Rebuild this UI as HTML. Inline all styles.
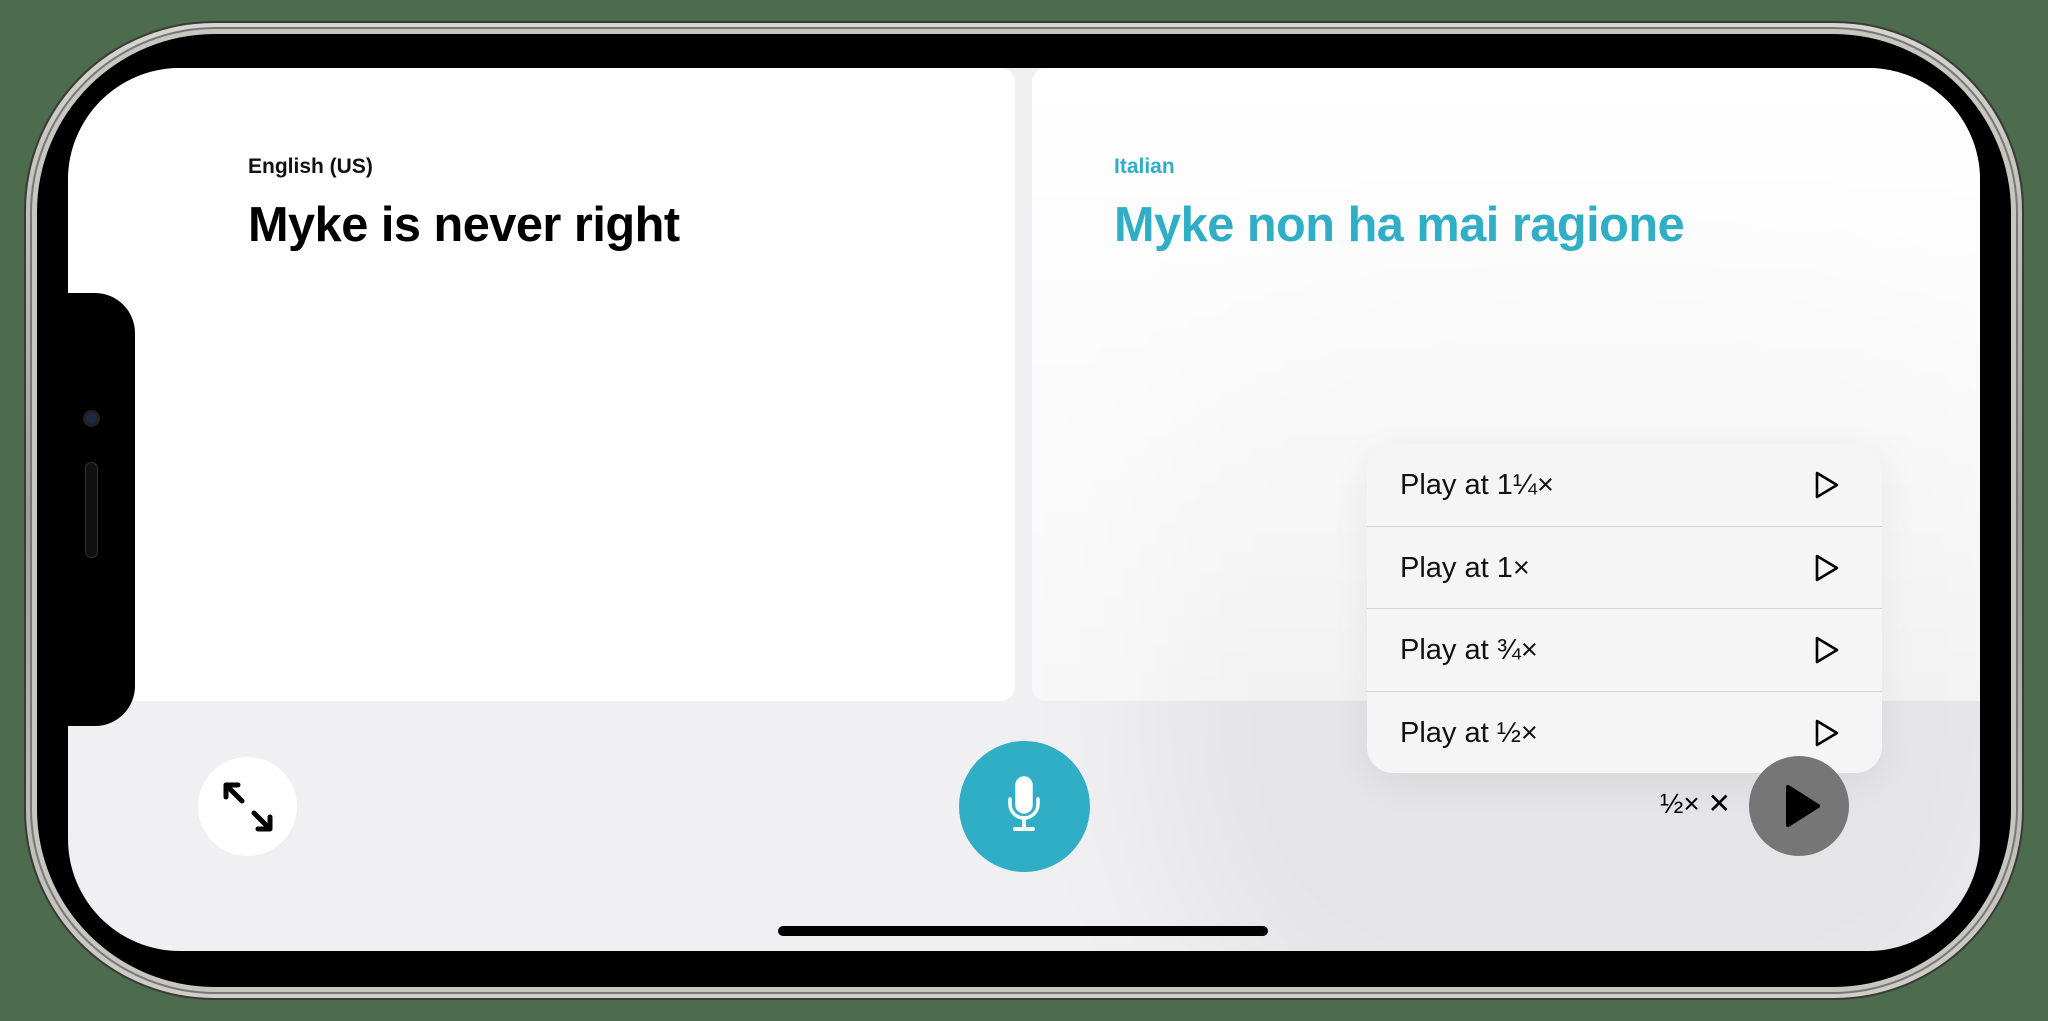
<!DOCTYPE html>
<html><head><meta charset="utf-8"><style>
*{margin:0;padding:0;box-sizing:border-box}
html,body{width:2048px;height:1021px;overflow:hidden;background:#4d6b4d;font-family:"Liberation Sans",sans-serif}
.rim{position:absolute;left:24px;top:21px;width:2000px;height:979px;border-radius:190px;background:linear-gradient(#d8d6d0,#a09e98 50%,#d0cec8);border:2px solid #3a3a38}
.rim2{position:absolute;left:30px;top:27px;width:1988px;height:967px;border-radius:186px;background:#c8c6c0;border:2px solid #777}
.black{position:absolute;left:37px;top:34px;width:1974px;height:953px;border-radius:178px;background:#000}
.screen{position:absolute;left:68px;top:68px;width:1912px;height:883px;border-radius:112px;background:#f0f0f2;overflow:hidden}
.lp{position:absolute;left:0;top:0;width:947px;height:633px;background:#fff;border-radius:0 14px 14px 0}
.rp{position:absolute;left:964px;top:0;width:960px;height:633px;background:#fff;border-radius:14px 0 0 14px}
.notch{position:absolute;left:0;top:225px;width:67px;height:433px;background:#000;border-radius:0 40px 40px 0}
.shadow{position:absolute;left:1180px;top:260px;width:700px;height:650px;border-radius:200px;box-shadow:0 0 180px 60px rgba(0,0,0,0.07);background:rgba(0,0,0,0.045);filter:blur(60px)}
.lab{position:absolute;font-size:21px;font-weight:bold}
.ttl{position:absolute;font-size:48.7px;font-weight:bold;letter-spacing:-0.5px}
.menu{position:absolute;left:1299px;top:376px;width:515px;height:329px;border-radius:26px;background:#f5f5f5;overflow:hidden;box-shadow:0 10px 40px rgba(0,0,0,0.06)}
.row{height:82.5px;border-bottom:1.5px solid #d4d4d6;position:relative;font-size:29px;color:#111;line-height:82px;padding-left:33px}
.row:last-child{border-bottom:none}
.row svg{position:absolute;left:447px;top:26px}
.circ{position:absolute;border-radius:50%}
</style></head><body>
<div class="rim"></div><div class="rim2"></div><div class="black"></div>
<div class="screen">
 <div class="lp"></div>
 <div class="shadow"></div>
 <div class="rp" style="background:linear-gradient(180deg,rgba(255,255,255,1) 0%,rgba(255,255,255,0.5) 100%)"></div>
 <div class="notch"></div>
 <div class="lab" style="left:180px;top:87px;color:#111">English (US)</div>
 <div class="ttl" style="left:180px;top:129px;color:#000">Myke is never right</div>
 <div class="lab" style="left:1046px;top:87px;color:#30aec6">Italian</div>
 <div class="ttl" style="left:1046px;top:129px;color:#30aec6">Myke non ha mai ragione</div>
 <div class="menu">
  <div class="row">Play at 1¼×<svg width="26" height="30" viewBox="0 0 26 30"><path d="M3 3 L23 15 L3 27 Z" fill="none" stroke="#000" stroke-width="2.6" stroke-linejoin="round"/></svg></div>
  <div class="row">Play at 1×<svg width="26" height="30" viewBox="0 0 26 30"><path d="M3 3 L23 15 L3 27 Z" fill="none" stroke="#000" stroke-width="2.6" stroke-linejoin="round"/></svg></div>
  <div class="row">Play at ¾×<svg width="26" height="30" viewBox="0 0 26 30"><path d="M3 3 L23 15 L3 27 Z" fill="none" stroke="#000" stroke-width="2.6" stroke-linejoin="round"/></svg></div>
  <div class="row">Play at ½×<svg width="26" height="30" viewBox="0 0 26 30"><path d="M3 3 L23 15 L3 27 Z" fill="none" stroke="#000" stroke-width="2.6" stroke-linejoin="round"/></svg></div>
 </div>
 <div class="circ" style="left:130px;top:689px;width:99px;height:99px;background:#fff"></div>
 <svg style="position:absolute;left:150px;top:709px" width="60" height="60" viewBox="0 0 60 60"><g stroke="#000" stroke-width="5" stroke-linecap="round" fill="none"><path d="M8 8 L24 24 M8 8 L8 20 M8 8 L20 8"/><path d="M52 52 L36 36 M52 52 L52 40 M52 52 L40 52"/></g></svg>
 <div class="circ" style="left:891px;top:673px;width:131px;height:131px;background:#30aec6"></div>
 <svg style="position:absolute;left:926px;top:708px" width="60" height="60" viewBox="0 0 60 60"><g fill="none" stroke="#fff" stroke-width="3.5" stroke-linecap="round"><rect x="23" y="2" width="14" height="34" rx="7" fill="#fff"/><path d="M16 23 V28 A14 14 0 0 0 44 28 V23"/><path d="M30 42 V52 M21 53 H39" stroke-width="4"/></g></svg>
 <div style="position:absolute;left:1592px;top:719px;font-size:28px;color:#000;font-weight:500">½× ✕</div>
 <div class="circ" style="left:1681px;top:688px;width:100px;height:100px;background:#767676"></div>
 <svg style="position:absolute;left:1708px;top:713px" width="50" height="50" viewBox="0 0 50 50"><path d="M12 6 L42 25 L12 44 Z" fill="#000" stroke="#000" stroke-width="4" stroke-linejoin="round"/></svg>
 <div style="position:absolute;left:710px;top:858px;width:490px;height:10px;border-radius:5px;background:#000"></div>
</div>
<div class="circ" style="left:83px;top:410px;width:17px;height:17px;background:#1a2a44;border:3px solid #222"></div>
<div style="position:absolute;left:85px;top:462px;width:13px;height:96px;border-radius:7px;background:#111;border:1px solid #333"></div>
</body></html>
